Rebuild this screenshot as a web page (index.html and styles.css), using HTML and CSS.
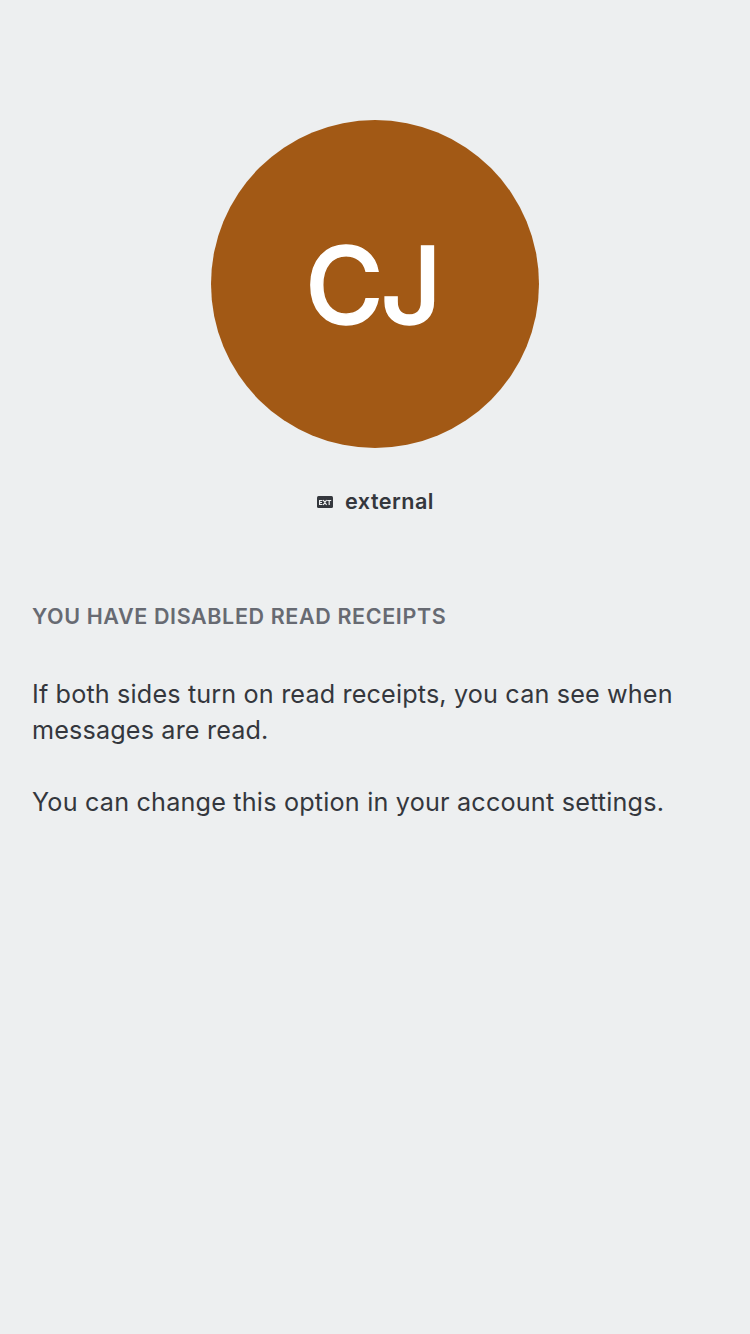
FILE: index.html
```html
<!DOCTYPE html>
<html lang="en">
<head>
<meta charset="utf-8">
<title>Profile</title>
<link rel="stylesheet" href="styles.css">
</head>
<body>
<main class="profile">
  <div class="avatar"><span class="initials">CJ</span></div>
  <div class="badge">
    <svg class="badge-icon" viewBox="0 0 16 12" aria-hidden="true">
      <rect width="16" height="12" rx="1.5"/>
      <path d="M5.4 4.5H2.6V8.5H5.4M2.6 6.5H5M6.2 4L9.6 9M9.6 4L6.2 9M10.2 4.5H14.2M12.2 4.5V9"/>
    </svg>
    <span class="badge-label">external</span>
  </div>
  <section class="receipts">
    <h2 class="heading">YOU HAVE DISABLED READ RECEIPTS</h2>
    <p class="text">If both sides turn on read receipts, you can see when messages are read.</p>
    <p class="text last">You can change this option in your account settings.</p>
  </section>
</main>
</body>
</html>
```
FILE: styles.css
```css
body {
  margin: 0;
  background: #edeff0;
  color: #34373d;
  font-family: Inter, sans-serif;
}
.profile {
  display: flex;
  flex-direction: column;
  align-items: center;
  box-sizing: border-box;
  min-height: 1334px;
  padding-top: 120px;
}
.avatar {
  display: flex;
  align-items: center;
  justify-content: center;
  width: 328px;
  height: 328px;
  border-radius: 50%;
  background: #a25915;
}
.initials {
  padding: 2px 6px 0 0;
  color: #fff;
  font-size: 107px;
  font-weight: 500;
  letter-spacing: -3px;
  line-height: 1;
  -webkit-text-stroke: 1.4px #fff;
}
.badge {
  display: flex;
  align-items: center;
  gap: 12px;
  height: 30px;
  margin-top: 39px;
  padding-left: 1px;
}
.badge-icon {
  width: 16px;
  height: 12px;
  fill: #34373d;
}
.badge-icon path {
  fill: none;
  stroke: #edeff0;
  stroke-width: 1.2;
}
.badge-label {
  margin-top: -2px;
  font-size: 21.6px;
  font-weight: 600;
  letter-spacing: 0.45px;
}
.receipts {
  align-self: stretch;
  padding: 0 32px;
  margin-top: 85px;
}
.heading {
  margin: 0;
  color: #676a72;
  font-size: 21.5px;
  font-weight: 600;
  letter-spacing: 0.62px;
  line-height: 28px;
}
.text {
  margin: 46px 0 0;
  font-size: 25.2px;
  letter-spacing: 0.15px;
  line-height: 36px;
}
.last {
  margin-top: 36px;
  letter-spacing: 0.19px;
}
```
